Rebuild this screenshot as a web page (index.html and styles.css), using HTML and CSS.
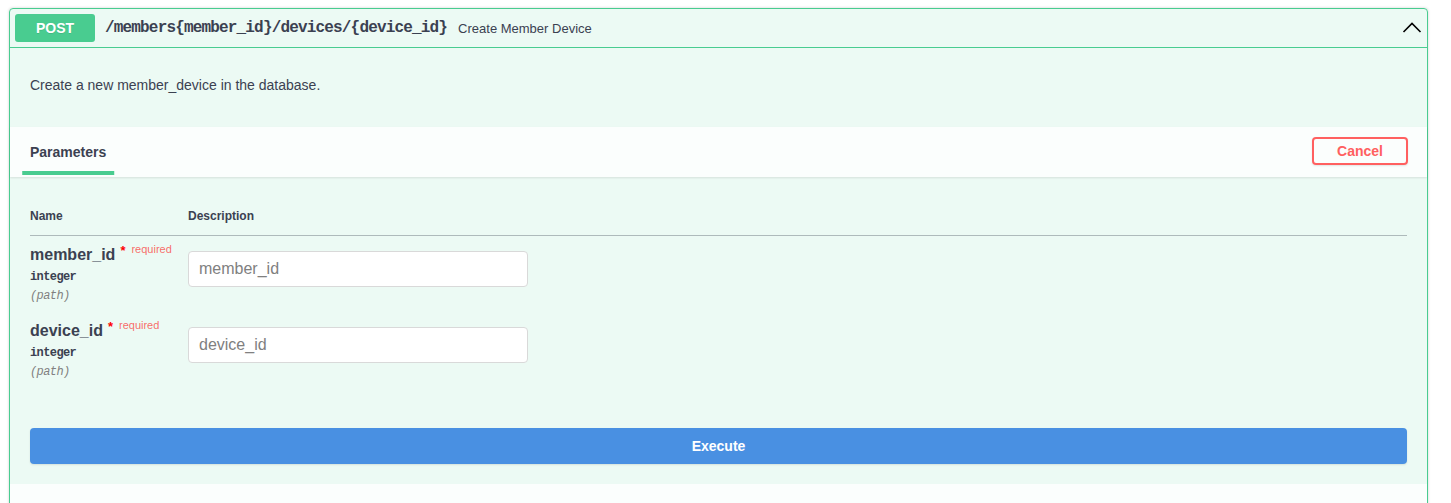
FILE: index.html
```html
<!DOCTYPE html>
<html>
<head>
<meta charset="utf-8">
<link rel="stylesheet" href="styles.css">
</head>
<body>
<div class="opblock">
  <div class="summary">
    <span class="method">POST</span>
    <span class="path">/members{member_id}/devices/{device_id}</span>
    <span class="summary-desc">Create Member Device</span>
    <span class="spacer"></span>
    <svg class="arrow" width="20" height="20" viewBox="0 0 20 20"><polyline points="1.5,14 10,5.5 18.5,14" fill="none" stroke="#000" stroke-width="1.6"/></svg>
  </div>
  <div class="body">
    <div class="desc-wrapper"><p>Create a new member_device in the database.</p></div>
    <div class="section-header">
      <div class="tab"><span class="tab-label">Parameters</span></div>
      <button class="btn-cancel">Cancel</button>
    </div>
    <div class="table-container">
      <div class="thead">
        <div class="col-name">Name</div>
        <div class="col-desc">Description</div>
      </div>
      <div class="row">
        <div class="col-name">
          <div class="pname">member_id<span class="star">*</span><span class="req">required</span></div>
          <div class="ptype">integer</div>
          <div class="pin">(path)</div>
        </div>
        <div class="col-desc"><input class="pinput" type="text" placeholder="member_id"></div>
      </div>
      <div class="row">
        <div class="col-name">
          <div class="pname">device_id<span class="star">*</span><span class="req">required</span></div>
          <div class="ptype">integer</div>
          <div class="pin">(path)</div>
        </div>
        <div class="col-desc"><input class="pinput" type="text" placeholder="device_id"></div>
      </div>
    </div>
    <div class="execute-wrapper"><button class="btn-execute">Execute</button></div>
    <div class="responses-header"></div>
  </div>
</div>
</body>
</html>
```

FILE: styles.css
```css
html, body {
  margin: 0;
  padding: 0;
  background: #fff;
  font-family: "Liberation Sans", Arial, sans-serif;
  color: #3b4151;
}
.opblock {
  box-sizing: border-box;
  width: 1419px;
  margin: 8px 0 0 9px;
  border: 1px solid #49cc90;
  border-radius: 4px;
  background: rgba(73, 204, 144, 0.1);
  box-shadow: 0 0 3px rgba(0, 0, 0, 0.19);
}
.summary {
  display: flex;
  align-items: center;
  padding: 5px;
  box-sizing: border-box;
  border-bottom: 1px solid #49cc90;
  height: 39px;
}
.method {
  width: 80px;
  height: 28px;
  line-height: 28px;
  text-align: center;
  background: #49cc90;
  color: #fff;
  font-size: 14px;
  font-weight: bold;
  border-radius: 3px;
  text-shadow: 0 1px 0 rgba(0,0,0,.1);
}
.path {
  padding: 0 10px;
  font-family: "Liberation Mono", "DejaVu Sans Mono", monospace;
  font-size: 16px;
  font-weight: bold;
  letter-spacing: -0.83px;
  color: #3b4151;
}
.summary-desc {
  font-size: 13px;
  color: #3b4151;
  padding-left: 1px;
}
.spacer { flex: 1; }
.arrow { display: block; }
.desc-wrapper {
  padding: 15px 20px 20px;
  font-size: 14px;
}
.desc-wrapper p {
  margin: 14px 0;
  line-height: 16px;
}
.section-header {
  display: flex;
  align-items: center;
  justify-content: space-between;
  height: 50px;
  box-sizing: border-box;
  padding: 8px 20px;
  background: rgba(255, 255, 255, 0.8);
  box-shadow: 0 1px 2px rgba(0, 0, 0, 0.1);
}
.tab-label {
  position: relative;
  font-size: 14px;
  font-weight: bold;
  line-height: 16px;
  display: inline-block;
}
.tab-label::after {
  content: "";
  position: absolute;
  left: 50%;
  bottom: -15px;
  width: 120%;
  height: 4px;
  transform: translateX(-50%);
  background: #49cc90;
}
.btn-cancel {
  font-family: "Liberation Sans", Arial, sans-serif;
  font-size: 14px;
  font-weight: bold;
  line-height: 16px;
  color: #ff6060;
  background: transparent;
  border: 2px solid #ff6060;
  border-radius: 4px;
  padding: 4px 23px;
  box-shadow: 0 1px 2px rgba(0, 0, 0, 0.1);
  margin: 0 -1px -1px 0;
  position: relative;
  top: -2px;
}
.table-container {
  padding: 20px 20px 0;
}
.thead {
  display: flex;
  font-size: 12px;
  font-weight: bold;
  line-height: 14px;
  padding: 12px 0;
  border-bottom: 1px solid rgba(59, 65, 81, 0.35);
}
.col-name {
  width: 158px;
  flex: none;
}
.row {
  display: flex;
  padding: 10px 0;
  height: 76px;
  box-sizing: border-box;
}
.pname {
  font-size: 16px;
  font-weight: bold;
  line-height: 18px;
  white-space: nowrap;
}
.star {
  color: red;
  position: relative;
  top: -5px;
  font-size: 13px;
  padding-left: 5px;
}
.req {
  font-size: 11px;
  font-weight: normal;
  color: rgba(255, 0, 0, 0.6);
  position: relative;
  top: -7px;
  padding-left: 6px;
}
.ptype {
  font-family: "Liberation Mono", "DejaVu Sans Mono", monospace;
  font-size: 12px;
  font-weight: bold;
  letter-spacing: -0.6px;
  line-height: 14px;
  padding: 5px 0 5px;
}
.pin {
  font-family: "Liberation Mono", "DejaVu Sans Mono", monospace;
  font-size: 12px;
  font-style: italic;
  letter-spacing: -0.6px;
  line-height: 14px;
  color: #808080;
}
.pinput {
  box-sizing: border-box;
  width: 340px;
  height: 36px;
  margin: 5px 0;
  padding: 8px 10px;
  border: 1px solid #d9d9d9;
  border-radius: 4px;
  background: #fff;
  font-family: "Liberation Sans", Arial, sans-serif;
  font-size: 16px;
  color: #3b4151;
  outline: none;
}
.pinput::placeholder { color: #808080; }
.execute-wrapper {
  padding: 40px 20px 20px;
}
.btn-execute {
  display: block;
  width: 100%;
  height: 36px;
  border: 0;
  border-radius: 4px;
  background: #4990e2;
  color: #fff;
  font-family: "Liberation Sans", Arial, sans-serif;
  font-size: 14px;
  font-weight: bold;
  box-shadow: 0 1px 2px rgba(0, 0, 0, 0.1);
}
.responses-header {
  height: 50px;
  background: rgba(255, 255, 255, 0.8);
}
```
